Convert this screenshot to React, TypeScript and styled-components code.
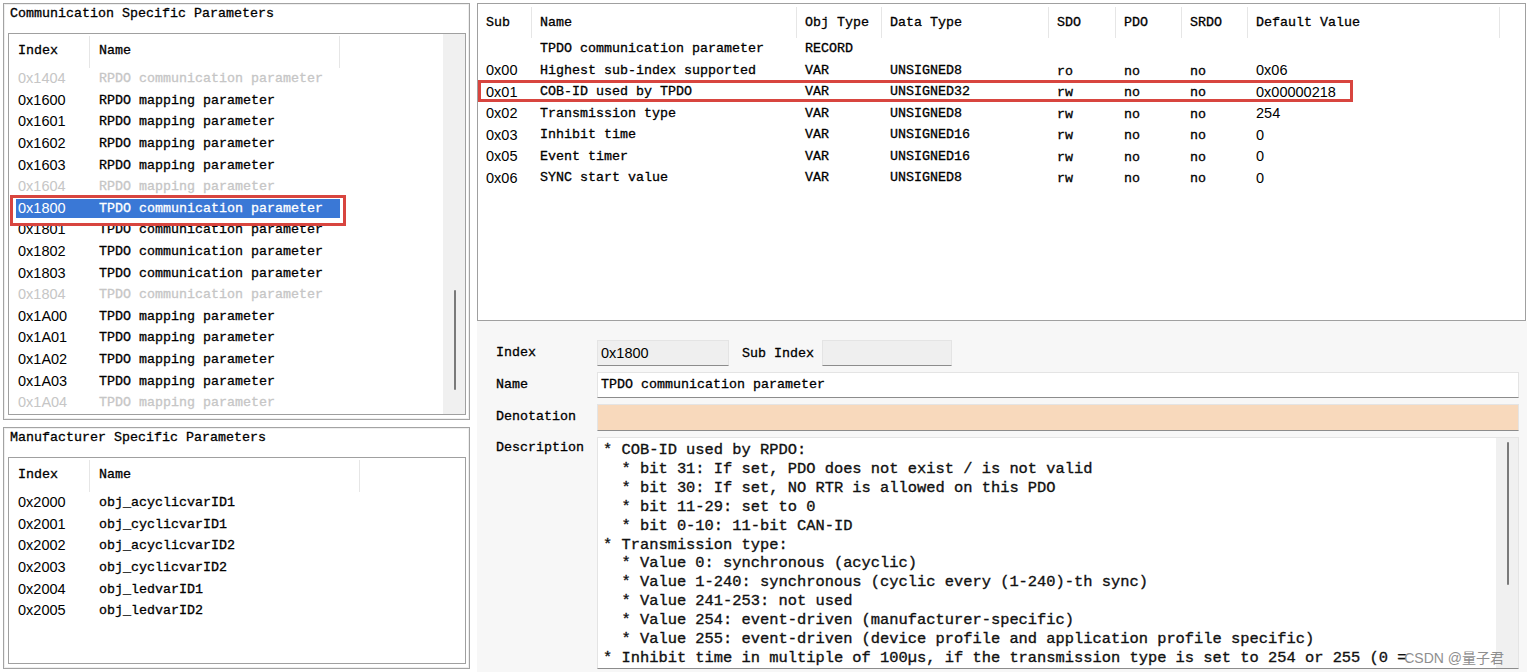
import React from "react";
import styled, { createGlobalStyle } from "styled-components";

const MONO = `"Liberation Mono", "DejaVu Sans Mono", monospace`;
const SANS = `"Liberation Sans", Arial, sans-serif`;

const GlobalStyle = createGlobalStyle`
  html, body {
    margin: 0;
    padding: 0;
    background: #ffffff;
  }
  body {
    width: 1530px;
    height: 672px;
    overflow: hidden;
    font-family: ${MONO};
    color: #000;
  }
`;

// the dialog's bitmap font is heavier than Liberation Mono, thicken a bit
const monoText = `
  font-family: ${MONO};
  font-size: 13.33px;
  -webkit-text-stroke: 0.3px currentColor;
`;

type ListRow = { index: string; name: string; dim?: boolean; selected?: boolean };

const commRows: ListRow[] = [
  { index: "0x1404", name: "RPDO communication parameter", dim: true },
  { index: "0x1600", name: "RPDO mapping parameter" },
  { index: "0x1601", name: "RPDO mapping parameter" },
  { index: "0x1602", name: "RPDO mapping parameter" },
  { index: "0x1603", name: "RPDO mapping parameter" },
  { index: "0x1604", name: "RPDO mapping parameter", dim: true },
  { index: "0x1800", name: "TPDO communication parameter", selected: true },
  { index: "0x1801", name: "TPDO communication parameter" },
  { index: "0x1802", name: "TPDO communication parameter" },
  { index: "0x1803", name: "TPDO communication parameter" },
  { index: "0x1804", name: "TPDO communication parameter", dim: true },
  { index: "0x1A00", name: "TPDO mapping parameter" },
  { index: "0x1A01", name: "TPDO mapping parameter" },
  { index: "0x1A02", name: "TPDO mapping parameter" },
  { index: "0x1A03", name: "TPDO mapping parameter" },
  { index: "0x1A04", name: "TPDO mapping parameter", dim: true },
];

const mfrRows: ListRow[] = [
  { index: "0x2000", name: "obj_acyclicvarID1" },
  { index: "0x2001", name: "obj_cyclicvarID1" },
  { index: "0x2002", name: "obj_acyclicvarID2" },
  { index: "0x2003", name: "obj_cyclicvarID2" },
  { index: "0x2004", name: "obj_ledvarID1" },
  { index: "0x2005", name: "obj_ledvarID2" },
];

type SubEntry = {
  sub: string;
  name: string;
  obj: string;
  data: string;
  sdo: string;
  pdo: string;
  srdo: string;
  def: string;
  marked?: boolean;
};

const subEntries: SubEntry[] = [
  { sub: "", name: "TPDO communication parameter", obj: "RECORD", data: "", sdo: "", pdo: "", srdo: "", def: "" },
  { sub: "0x00", name: "Highest sub-index supported", obj: "VAR", data: "UNSIGNED8", sdo: "ro", pdo: "no", srdo: "no", def: "0x06" },
  { sub: "0x01", name: "COB-ID used by TPDO", obj: "VAR", data: "UNSIGNED32", sdo: "rw", pdo: "no", srdo: "no", def: "0x00000218", marked: true },
  { sub: "0x02", name: "Transmission type", obj: "VAR", data: "UNSIGNED8", sdo: "rw", pdo: "no", srdo: "no", def: "254" },
  { sub: "0x03", name: "Inhibit time", obj: "VAR", data: "UNSIGNED16", sdo: "rw", pdo: "no", srdo: "no", def: "0" },
  { sub: "0x05", name: "Event timer", obj: "VAR", data: "UNSIGNED16", sdo: "rw", pdo: "no", srdo: "no", def: "0" },
  { sub: "0x06", name: "SYNC start value", obj: "VAR", data: "UNSIGNED8", sdo: "rw", pdo: "no", srdo: "no", def: "0" },
];

const description = [
  "* COB-ID used by RPDO:",
  "  * bit 31: If set, PDO does not exist / is not valid",
  "  * bit 30: If set, NO RTR is allowed on this PDO",
  "  * bit 11-29: set to 0",
  "  * bit 0-10: 11-bit CAN-ID",
  "* Transmission type:",
  "  * Value 0: synchronous (acyclic)",
  "  * Value 1-240: synchronous (cyclic every (1-240)-th sync)",
  "  * Value 241-253: not used",
  "  * Value 254: event-driven (manufacturer-specific)",
  "  * Value 255: event-driven (device profile and application profile specific)",
  "* Inhibit time in multiple of 100\u00b5s, if the transmission type is set to 254 or 255 (0 =",
];

function ObjectList({ rows, nameWidth, scroll }: { rows: ListRow[]; nameWidth: number; scroll?: boolean }) {
  return (
    <ListBox>
      <ListMain>
        <ListHeader $nameWidth={nameWidth}>
          <HeaderCell $divider>Index</HeaderCell>
          <HeaderCell $divider>Name</HeaderCell>
          <HeaderCell />
        </ListHeader>
        {rows.map((r) => (
          <ListRowWrap key={r.index} $nameWidth={nameWidth} $dim={r.dim}>
            <IndexCell $selected={r.selected}>{r.index}</IndexCell>
            <NameCell $selected={r.selected}>{r.name}</NameCell>
            {r.selected && <RedMark $left={1} $top={-3} $width={336} $height={31} />}
          </ListRowWrap>
        ))}
      </ListMain>
      {scroll && (
        <ScrollTrack>
          <ScrollThumb $offset={256} $length={100} />
        </ScrollTrack>
      )}
    </ListBox>
  );
}

export default function App() {
  return (
    <>
      <GlobalStyle />
      <Page>
        <LeftColumn>
          <GroupBox $height={417}>
            <GroupTitle>Communication Specific Parameters</GroupTitle>
            <ObjectList rows={commRows} nameWidth={250} scroll />
          </GroupBox>
          <GroupBox $height={242}>
            <GroupTitle>Manufacturer Specific Parameters</GroupTitle>
            <ObjectList rows={mfrRows} nameWidth={270} />
          </GroupBox>
        </LeftColumn>

        <RightColumn>
          <TablePanel>
            <TableHeader>
              <THead $divider>Sub</THead>
              <THead $divider>Name</THead>
              <THead $divider>Obj Type</THead>
              <THead $divider>Data Type</THead>
              <THead $divider>SDO</THead>
              <THead $divider>PDO</THead>
              <THead $divider>SRDO</THead>
              <THead $divider>Default Value</THead>
              <THead />
            </TableHeader>
            {subEntries.map((e, i) => (
              <TableRow key={i}>
                <TCell $sans>{e.sub}</TCell>
                <TCell>{e.name}</TCell>
                <TCell>{e.obj}</TCell>
                <TCell>{e.data}</TCell>
                <TCell $low>{e.sdo}</TCell>
                <TCell $low>{e.pdo}</TCell>
                <TCell $low>{e.srdo}</TCell>
                <TCell $sans>{e.def}</TCell>
                <TCell />
                {e.marked && <RedMark $left={0} $top={-1} $width={875} $height={22} />}
              </TableRow>
            ))}
          </TablePanel>

          <DetailForm>
            <FieldLabel>Index</FieldLabel>
            <IndexLine>
              <Field $width={132} $tone="readonly" $sans>
                0x1800
              </Field>
              <InlineLabel>Sub Index</InlineLabel>
              <Field $width={130} $tone="readonly" />
            </IndexLine>

            <FieldLabel>Name</FieldLabel>
            <Field $tone="plain">TPDO communication parameter</Field>

            <FieldLabel>Denotation</FieldLabel>
            <Field $tone="peach" />

            <FieldLabel $top>Description</FieldLabel>
            <DescBox>
              <DescText>{description.join("\n")}</DescText>
              <ScrollTrack>
                <ScrollThumb $offset={4} $length={143} />
              </ScrollTrack>
              <Watermark>CSDN @量子君</Watermark>
            </DescBox>
          </DetailForm>
        </RightColumn>
      </Page>
    </>
  );
}

const Page = styled.div`
  display: flex;
  gap: 7px;
  padding: 3px 3px 0 3px;
  height: 672px;
  box-sizing: border-box;
`;

const LeftColumn = styled.div`
  width: 467px;
  flex-shrink: 0;
  display: flex;
  flex-direction: column;
  gap: 7px;
`;

const GroupBox = styled.div<{ $height: number }>`
  height: ${(p) => p.$height}px;
  box-sizing: border-box;
  border: 1px solid #a3a3a3;
  box-shadow: inset 0 0 0 1px #efefef;
  display: flex;
  flex-direction: column;
  background: #fff;
`;

const GroupTitle = styled.div`
  ${monoText}
  line-height: 18px;
  padding: 1px 0 0 6px;
  margin-bottom: 10px;
  white-space: nowrap;
`;

const ListBox = styled.div`
  flex: 1;
  margin: 0 3px 4px 4px;
  border: 1px solid #a0a0a0;
  display: flex;
  background: #fff;
  overflow: hidden;
`;

const ListMain = styled.div`
  flex: 1;
  min-width: 0;
`;

const ListHeader = styled.div<{ $nameWidth: number }>`
  display: grid;
  grid-template-columns: 81px ${(p) => p.$nameWidth}px 1fr;
  height: 34px;
`;

const HeaderCell = styled.div<{ $divider?: boolean }>`
  ${monoText}
  line-height: 30px;
  margin-top: 2px;
  padding-left: 9px;
  border-right: ${(p) => (p.$divider ? "1px solid #e6e6e6" : "none")};
  white-space: nowrap;
`;

const ListRowWrap = styled.div<{ $nameWidth: number; $dim?: boolean }>`
  position: relative;
  display: grid;
  grid-template-columns: 81px ${(p) => p.$nameWidth}px 1fr;
  height: 21.6px;
  align-items: center;
  color: ${(p) => (p.$dim ? "#c6c6c6" : "#000")};
`;

const IndexCell = styled.div<{ $selected?: boolean }>`
  font-family: ${SANS};
  font-size: 14.5px;
  height: 19px;
  line-height: 19px;
  margin-left: ${(p) => (p.$selected ? "7px" : "0")};
  padding-left: ${(p) => (p.$selected ? "2px" : "9px")};
  background: ${(p) => (p.$selected ? "#3a78d6" : "transparent")};
  color: ${(p) => (p.$selected ? "#fff" : "inherit")};
`;

const NameCell = styled.div<{ $selected?: boolean }>`
  ${monoText}
  height: 19px;
  line-height: 19px;
  padding-left: 9px;
  white-space: nowrap;
  background: ${(p) => (p.$selected ? "#3a78d6" : "transparent")};
  color: ${(p) => (p.$selected ? "#fff" : "inherit")};
`;

const RedMark = styled.div<{ $left: number; $top: number; $width: number; $height: number }>`
  position: absolute;
  left: ${(p) => p.$left}px;
  top: ${(p) => p.$top}px;
  width: ${(p) => p.$width}px;
  height: ${(p) => p.$height}px;
  box-sizing: border-box;
  border: 3px solid #d8453f;
  pointer-events: none;
  z-index: 2;
`;

const ScrollTrack = styled.div`
  width: 22px;
  flex-shrink: 0;
  background: #f0f0f0;
  display: flex;
  flex-direction: column;
  align-items: center;
`;

const ScrollThumb = styled.div<{ $offset: number; $length: number }>`
  margin-top: ${(p) => p.$offset}px;
  height: ${(p) => p.$length}px;
  width: 2px;
  margin-left: 2px;
  border-radius: 1px;
  background: #7a7a7a;
`;

const RightColumn = styled.div`
  width: 1050px;
  display: flex;
  flex-direction: column;
`;

const TablePanel = styled.div`
  height: 318px;
  flex-shrink: 0;
  box-sizing: border-box;
  margin-right: 1px;
  border: 1px solid #a0a0a0;
  background: #fff;
`;

const tableColumns = "54px 265px 85px 167px 67px 66px 66px 252px 1fr";

const TableHeader = styled.div`
  display: grid;
  grid-template-columns: ${tableColumns};
  height: 34px;
`;

const THead = styled.div<{ $divider?: boolean }>`
  ${monoText}
  line-height: 31px;
  margin-top: 3px;
  padding-left: 8px;
  white-space: nowrap;
  border-right: ${(p) => (p.$divider ? "1px solid #e6e6e6" : "none")};
`;

const TableRow = styled.div`
  position: relative;
  display: grid;
  grid-template-columns: ${tableColumns};
  height: 21.5px;
  align-items: center;
`;

const TCell = styled.div<{ $sans?: boolean; $low?: boolean }>`
  ${monoText}
  font-family: ${(p) => (p.$sans ? SANS : MONO)};
  font-size: ${(p) => (p.$sans ? "14.5px" : "13.33px")};
  -webkit-text-stroke: ${(p) => (p.$sans ? "0" : "0.3px currentColor")};
  padding-left: 8px;
  padding-top: ${(p) => (p.$low ? "2px" : "0")};
  white-space: nowrap;
`;

const DetailForm = styled.div`
  flex: 1;
  background: #f7f7f7;
  padding: 19px 8px 3px 19px;
  display: grid;
  grid-template-columns: 101px 1fr;
  grid-template-rows: 26px 26px 27px 1fr;
  row-gap: 6px;
  min-height: 0;
`;

const FieldLabel = styled.div<{ $top?: boolean }>`
  ${monoText}
  line-height: ${(p) => (p.$top ? "18px" : "26px")};
  padding-top: ${(p) => (p.$top ? "2px" : "0")};
  white-space: nowrap;
`;

const IndexLine = styled.div`
  display: flex;
  align-items: center;
`;

const InlineLabel = styled.div`
  ${monoText}
  margin: 0 8px 0 13px;
  white-space: nowrap;
`;

const fieldTones = {
  readonly: "#efefef",
  plain: "#ffffff",
  peach: "#f8d9bc",
};

const Field = styled.div<{ $width?: number; $tone: keyof typeof fieldTones; $sans?: boolean }>`
  ${monoText}
  width: ${(p) => (p.$width ? `${p.$width}px` : "auto")};
  height: 100%;
  box-sizing: border-box;
  background: ${(p) => fieldTones[p.$tone]};
  border: 1px solid #e4e4e4;
  border-bottom-color: #8c8c8c;
  padding-left: 3px;
  font-family: ${(p) => (p.$sans ? SANS : MONO)};
  font-size: ${(p) => (p.$sans ? "14.5px" : "13.33px")};
  -webkit-text-stroke: ${(p) => (p.$sans ? "0" : "0.3px currentColor")};
  line-height: 24px;
  white-space: nowrap;
`;

const DescBox = styled.div`
  position: relative;
  display: flex;
  min-height: 0;
  background: #fff;
  border: 1px solid #e4e4e4;
  border-bottom-color: #8c8c8c;
  overflow: hidden;
`;

const DescText = styled.div`
  flex: 1;
  min-width: 0;
  overflow: hidden;
  white-space: pre;
  font-family: ${MONO};
  font-size: 15.4px;
  -webkit-text-stroke: 0.35px currentColor;
  line-height: 18.9px;
  padding: 3px 0 0 5px;
  color: #111;
`;

const Watermark = styled.div`
  position: absolute;
  right: 12px;
  bottom: 1px;
  font-family: ${SANS}, "Noto Sans CJK SC", sans-serif;
  font-size: 14px;
  color: #8e8e8e;
  padding: 0 2px;
  line-height: 18px;
`;
